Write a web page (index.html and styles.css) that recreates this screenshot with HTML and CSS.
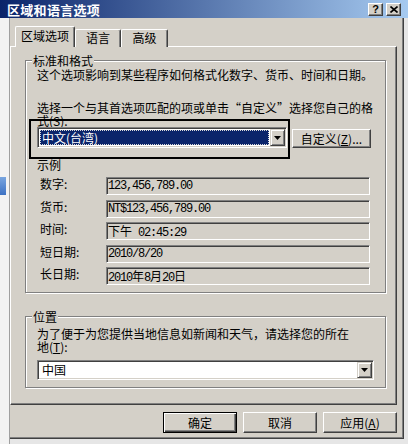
FILE: index.html
```html
<!DOCTYPE html>
<html lang="zh-CN">
<head>
    <meta charset="UTF-8">
    <meta name="viewport" content="width=device-width, initial-scale=1.0">
    <title>区域和语言选项</title>
    <link rel="stylesheet" href="styles.css">
</head>
<body>
    <div class="screen">
        <div class="titlebar">
            <span class="title">区域和语言选项</span>
            <div class="caption-buttons">
                <span class="cap-btn cap-help">?</span>
                <span class="cap-btn">
                    <svg width="8" height="7" viewBox="0 0 8 7"><path d="M0.5 0.5 L7.5 6.5 M7.5 0.5 L0.5 6.5" stroke="#000" stroke-width="1.6" fill="none"/></svg>
                </span>
            </div>
        </div>

        <div class="desk">
            <!-- strip of the window behind the dialog -->
            <div class="behind">
                <div class="behind-blue"></div>
            </div>

            <div class="dialog">
                <div class="tabs">
                    <span class="tab tab-active">区域选项</span>
                    <span class="tab tab-lang">语言</span>
                    <span class="tab tab-adv">高级</span>
                </div>

                <div class="panel">
                    <div class="group group-format">
                        <div class="legend">标准和格式</div>
                        <p class="note note-first">这个选项影响到某些程序如何格式化数字、货币、时间和日期。</p>
                        <p class="note note-pick">选择一个与其首选项匹配的项或单击“自定义”选择您自己的格<br>式(<u>S</u>):</p>
                        <div class="combo-row">
                            <div class="combo combo-format">
                                <span class="combo-value">中文(台湾)</span>
                                <span class="drop-btn"><svg width="7" height="4" viewBox="0 0 7 4"><polygon points="0,0 7,0 3.5,4" fill="#000"/></svg></span>
                            </div>
                            <span class="btn btn-custom">自定义(<u>Z</u>)...</span>
                        </div>
                        <div class="sample-title">示例</div>
                        <div class="samples">
                            <div class="sample-row">
                                <span class="sample-label">数字:</span>
                                <span class="field">123,456,789.00</span>
                            </div>
                            <div class="sample-row">
                                <span class="sample-label">货币:</span>
                                <span class="field">NT$123,456,789.00</span>
                            </div>
                            <div class="sample-row">
                                <span class="sample-label">时间:</span>
                                <span class="field"><span class="cjk">下午</span> 02:45:29</span>
                            </div>
                            <div class="sample-row">
                                <span class="sample-label">短日期:</span>
                                <span class="field">2010/8/20</span>
                            </div>
                            <div class="sample-row">
                                <span class="sample-label">长日期:</span>
                                <span class="field">2010<span class="cjk">年</span>8<span class="cjk">月</span>20<span class="cjk">日</span></span>
                            </div>
                        </div>
                    </div>

                    <div class="group group-location">
                        <div class="legend">位置</div>
                        <p class="note note-loc">为了便于为您提供当地信息如新闻和天气，请选择您的所在<br>地(<u>T</u>):</p>
                        <div class="combo combo-location">
                            <span class="combo-text">中国</span>
                            <span class="drop-btn"><svg width="7" height="4" viewBox="0 0 7 4"><polygon points="0,0 7,0 3.5,4" fill="#000"/></svg></span>
                        </div>
                    </div>
                </div>

                <div class="actions">
                    <span class="btn btn-default">确定</span>
                    <span class="btn">取消</span>
                    <span class="btn">应用(<u>A</u>)</span>
                </div>
            </div>
        </div>

        <div class="highlight"></div>
    </div>
</body>
</html>
```

FILE: styles.css
```css
body {
    margin: 0;
    background-color: #d4d0c8;
    font-family: "Noto Sans CJK SC", sans-serif;
    font-size: 12px;
    line-height: 13px;
    color: #000;
}

.screen {
    width: 408px;
    height: 444px;
    position: relative;
    overflow: hidden;
    background-color: #e6e6e6;
}

.titlebar {
    height: 18px;
    display: flex;
    align-items: center;
    justify-content: space-between;
    padding: 0 7px 0 7px;
    background: linear-gradient(to right, #0a246a, #a6caf0);
}

.title {
    color: #fff;
    font-weight: bold;
    font-size: 13px;
    letter-spacing: 0.3px;
}

.caption-buttons {
    display: flex;
    gap: 3px;
}

.cap-btn {
    width: 15px;
    height: 13px;
    box-sizing: border-box;
    display: flex;
    align-items: center;
    justify-content: center;
    background-color: #d4d0c8;
    border: 1px solid;
    border-color: #fff #404040 #404040 #fff;
    box-shadow: inset -1px -1px 0 #808080;
}

.cap-help {
    font-family: "Liberation Sans", sans-serif;
    font-weight: bold;
    font-size: 11px;
    line-height: 11px;
}

.desk {
    display: flex;
    height: 426px;
}

.behind {
    width: 10px;
    box-sizing: border-box;
    background-color: #f3f3f3;
    border-right: 1px solid #a0a0a0;
}

.behind-blue {
    margin-top: 159px;
    width: 6px;
    height: 18px;
    background: linear-gradient(#7aa6e0, #3d72c4);
}

.dialog {
    width: 394px;
    height: 421px;
    box-sizing: border-box;
    background-color: #d4d0c8;
    border-right: 1px solid #404040;
    border-bottom: 1px solid #404040;
    box-shadow: inset -1px -1px 0 #808080;
}

/* tabs */
.tabs {
    display: flex;
    align-items: flex-end;
    height: 29px;
    margin-bottom: -1px;
    padding-left: 5px;
}

.tab {
    height: 18px;
    box-sizing: border-box;
    text-align: center;
    line-height: 15px;
    background-color: #d4d0c8;
    border-top: 1px solid #fff;
    border-left: 1px solid #fff;
    border-right: 1px solid #404040;
    border-radius: 2px 2px 0 0;
    box-shadow: inset -1px 0 0 #808080;
}

.tab-active {
    width: 60px;
    height: 21px;
    line-height: 17px;
    position: relative;
    z-index: 1;
}

.tab-lang {
    width: 46px;
}

.tab-adv {
    width: 47px;
}

.panel {
    width: 387px;
    height: 359px;
    box-sizing: border-box;
    padding: 13px 10px 0 14px;
    background-color: #d4d0c8;
    border-top: 1px solid #fff;
    border-left: 1px solid #fff;
    border-right: 1px solid #404040;
    border-bottom: 1px solid #404040;
    box-shadow: inset -1px -1px 0 #808080;
}

/* etched group boxes */
.group {
    border: 1px solid #808080;
    box-shadow: 1px 1px 0 #fff, inset 1px 1px 0 #fff;
    padding: 0 11px 7px 11px;
}

.group-location {
    margin-top: 23px;
}

.legend {
    width: max-content;
    margin: -7px 0 0 -5px;
    padding: 0 1px;
    background-color: #d4d0c8;
}

.note {
    margin: 0;
    white-space: nowrap;
}

.note-first {
    margin-top: 1px;
}

.note-pick {
    margin-top: 20px;
}

.note-loc {
    margin-top: 4px;
}

/* combo boxes */
.combo-row {
    display: flex;
    align-items: flex-start;
}

.combo {
    box-sizing: border-box;
    display: flex;
    background-color: #fff;
    border: 1px solid;
    border-color: #808080 #fff #fff #808080;
    box-shadow: inset 1px 1px 0 #404040, inset -1px -1px 0 #d4d0c8;
    padding: 1px;
}

.combo-format {
    width: 250px;
    height: 21px;
}

.combo-location {
    width: 337px;
    height: 20px;
    margin-top: 7px;
}

.combo-value {
    flex: 1;
    margin: 1px 1px 1px 1px;
    padding-left: 2px;
    line-height: 15px;
    color: #fff;
    background-color: #0a246a;
    outline: 1px dotted #d8d8d8;
    outline-offset: -1px;
}

.combo-text {
    flex: 1;
    padding-left: 3px;
    line-height: 16px;
}

.drop-btn {
    width: 15px;
    box-sizing: border-box;
    display: flex;
    align-items: center;
    justify-content: center;
    background-color: #d4d0c8;
    border: 1px solid;
    border-color: #d4d0c8 #404040 #404040 #d4d0c8;
    box-shadow: inset 1px 1px 0 #fff, inset -1px -1px 0 #808080;
}

/* push buttons */
.btn {
    width: 74px;
    height: 21px;
    box-sizing: border-box;
    display: flex;
    align-items: center;
    justify-content: center;
    background-color: #d4d0c8;
    border: 1px solid;
    border-color: #fff #404040 #404040 #fff;
    box-shadow: inset -1px -1px 0 #808080;
}

.btn-custom {
    width: 79px;
    height: 19px;
    margin: 2px 0 0 5px;
}

.btn-default {
    border: 1px solid #000;
    box-shadow: inset 1px 1px 0 #fff, inset -1px -1px 0 #404040, inset -2px -2px 0 #808080;
}

.actions {
    display: flex;
    justify-content: flex-end;
    gap: 6px;
    margin-top: 7px;
    padding-right: 6px;
}

/* sample fields */
.sample-title {
    margin-top: 10px;
}

.samples {
    display: flex;
    flex-direction: column;
    gap: 4.5px;
    margin-top: 6px;
}

.sample-row {
    display: flex;
    align-items: flex-start;
}

.sample-label {
    width: 66px;
    margin-left: 3px;
    line-height: 14px;
}

.field {
    width: 264px;
    height: 18px;
    box-sizing: border-box;
    padding-left: 1px;
    line-height: 16px;
    font-family: "Liberation Mono", "Noto Sans CJK SC", monospace;
    font-size: 12px;
    letter-spacing: -1.2px;
    white-space: nowrap;
    border: 1px solid;
    border-color: #808080 #fff #fff #808080;
    box-shadow: inset 1px 1px 0 #404040, inset -1px -1px 0 #d4d0c8;
}

.field .cjk {
    font-family: "Noto Sans CJK SC", sans-serif;
    letter-spacing: 0;
}

/* black marker drawn over the format picker */
.highlight {
    position: absolute;
    left: 29px;
    top: 119px;
    width: 261px;
    height: 40px;
    box-sizing: border-box;
    border: 2px solid #000;
}
```
